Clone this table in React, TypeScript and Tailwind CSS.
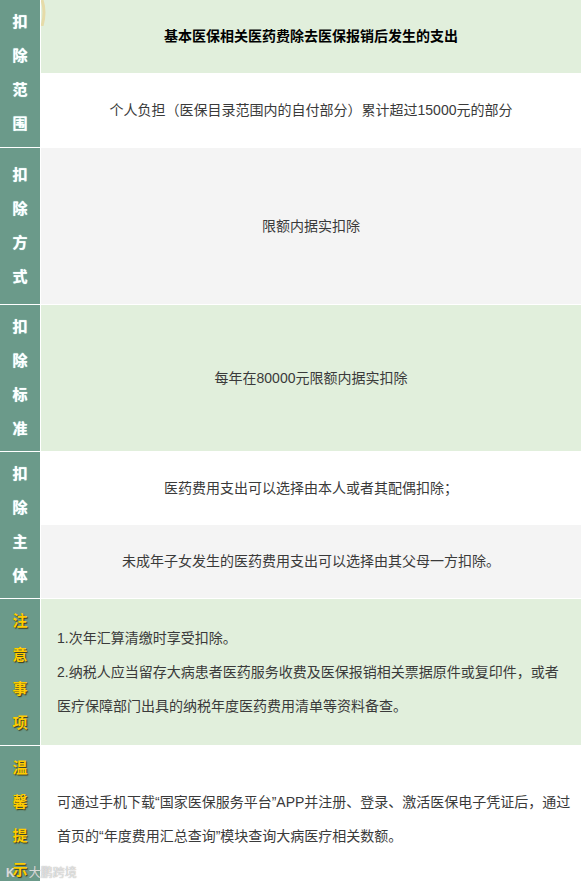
const font = { fontFamily: '"Liberation Sans", "Noto Sans CJK SC", sans-serif' };

type LabelProps = {
    chars: string;
    warm?: boolean;
}

function Label({ chars, warm }: LabelProps) {
    return (
        <div className="w-[40px] shrink-0 bg-[#6b9a8a] flex flex-col items-center justify-center">
            {chars.split("").map((c, i) => (
                <div
                    key={i}
                    className={
                        warm
                            ? "h-[34px] flex items-center text-[15px] font-bold text-[#ffcc00] [text-shadow:1px_1px_1px_#3a3a1a]"
                            : "h-[34px] flex items-center text-[15px] font-bold text-white [text-shadow:0_0_1px_#c8ffff]"
                    }
                >
                    {c}
                </div>
            ))}
        </div>
    );
}

function Cell({ text, bg, h, bold }: { text: string; bg: string; h: string; bold?: boolean }) {
    return (
        <div className={`${bg} ${h} flex items-center justify-center text-[14px] ${bold ? "font-bold text-black" : "text-[#3a3a3a]"}`}>
            {text}
        </div>
    );
}

export default function App() {
    return (
        <div style={font} className="relative w-[581px] h-[881px] overflow-hidden bg-white flex flex-col gap-[1px]">
            {/* 扣除范围 */}
            <div className="flex gap-[1px] h-[147px] shrink-0">
                <Label chars="扣除范围" />
                <div className="flex-1 flex flex-col">
                    <Cell text="基本医保相关医药费除去医保报销后发生的支出" bg="bg-[#e1efdc]" h="h-[73px]" bold />
                    <Cell text="个人负担（医保目录范围内的自付部分）累计超过15000元的部分" bg="bg-white" h="h-[74px]" />
                </div>
            </div>

            {/* 扣除方式 */}
            <div className="flex gap-[1px] h-[156px] shrink-0">
                <Label chars="扣除方式" />
                <div className="flex-1 flex flex-col">
                    <Cell text="限额内据实扣除" bg="bg-[#f4f4f4]" h="h-[156px]" />
                </div>
            </div>

            {/* 扣除标准 */}
            <div className="flex gap-[1px] h-[146px] shrink-0">
                <Label chars="扣除标准" />
                <div className="flex-1 flex flex-col">
                    <Cell text="每年在80000元限额内据实扣除" bg="bg-[#e1efdc]" h="h-[146px]" />
                </div>
            </div>

            {/* 扣除主体 */}
            <div className="flex gap-[1px] h-[146px] shrink-0">
                <Label chars="扣除主体" />
                <div className="flex-1 flex flex-col">
                    <Cell text="医药费用支出可以选择由本人或者其配偶扣除；" bg="bg-white" h="h-[73px]" />
                    <Cell text="未成年子女发生的医药费用支出可以选择由其父母一方扣除。" bg="bg-[#f4f4f4]" h="h-[73px]" />
                </div>
            </div>

            {/* 注意事项 */}
            <div className="flex gap-[1px] h-[146px] shrink-0">
                <Label chars="注意事项" warm />
                <div className="flex-1 bg-[#e1efdc] flex flex-col justify-center pl-[16px] text-[14px] leading-[34px] text-[#3a3a3a] whitespace-nowrap">
                    <p>1.次年汇算清缴时享受扣除。</p>
                    <p>2.纳税人应当留存大病患者医药服务收费及医保报销相关票据原件或复印件，或者</p>
                    <p>医疗保障部门出具的纳税年度医药费用清单等资料备查。</p>
                </div>
            </div>

            {/* 温馨提示 */}
            <div className="flex gap-[1px] h-[146px] shrink-0">
                <Label chars="温馨提示" warm />
                <div className="flex-1 bg-white flex flex-col justify-center pl-[16px] text-[14px] leading-[34px] text-[#3a3a3a] whitespace-nowrap">
                    <p>可通过手机下载“国家医保服务平台”APP并注册、登录、激活医保电子凭证后，通过</p>
                    <p>首页的“年度费用汇总查询”模块查询大病医疗相关数额。</p>
                </div>
            </div>

            {/* decorative arc, top left of content */}
            <svg className="absolute left-[41px] top-0" width="8" height="26" viewBox="0 0 8 26">
                <path d="M1 0 Q5 12 1 26" stroke="#e6dba8" strokeWidth="3" fill="none" />
            </svg>

            {/* watermark */}
            <div className="absolute left-[6px] bottom-[1px] flex items-center gap-[14px] text-[12px] leading-[14px] text-white/70 [text-shadow:0_0_1px_#888]">
                <span className="font-bold">K</span>
                <span>大鹏跨境</span>
            </div>
        </div>
    );
}
